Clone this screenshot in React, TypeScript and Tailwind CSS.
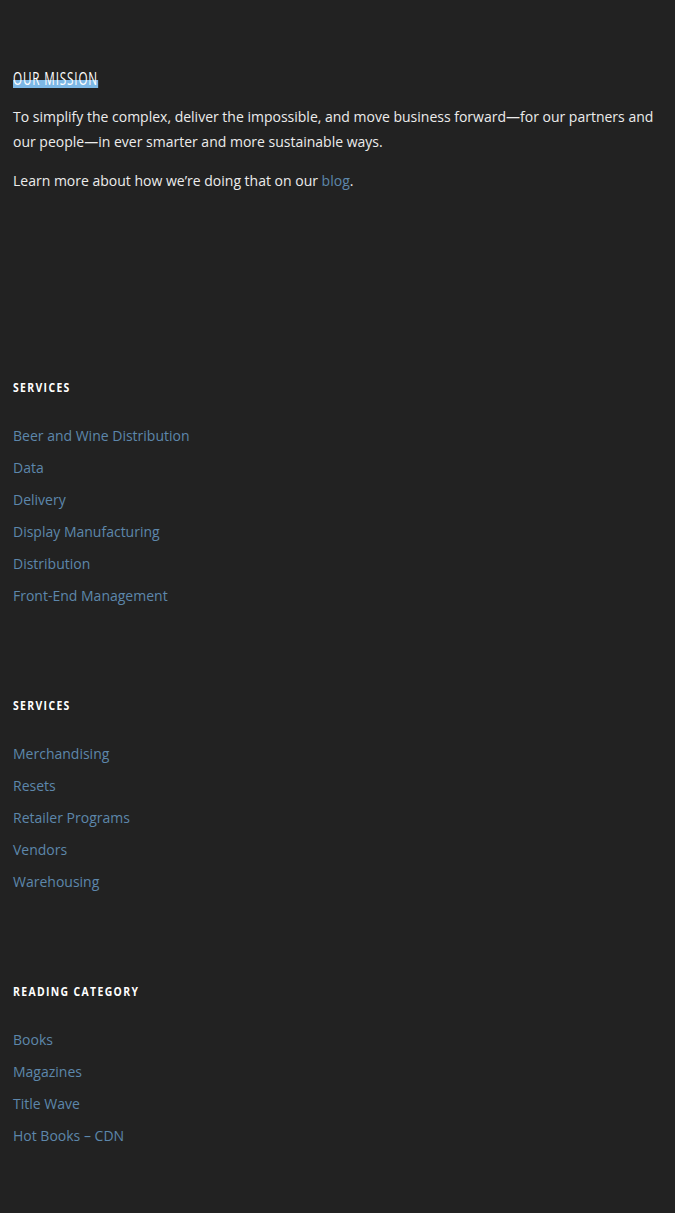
import React from "react";

const body = { fontFamily: '"Open Sans", "Noto Sans", sans-serif' };
const head = { fontFamily: '"Open Sans", "Noto Sans", sans-serif' };

function Heading({ children }: { children: React.ReactNode }) {
  return (
    <h3
      style={head}
      className="block w-fit origin-left scale-x-[0.8] text-[13px] leading-4 font-bold uppercase tracking-[1.7px] text-white"
    >
      {children}
    </h3>
  );
}

function LinkList({ items }: { items: string[] }) {
  return (
    <ul style={body} className="mt-6 flex flex-col">
      {items.map((t) => (
        <li key={t} className="h-8 flex items-center text-[14px] text-[#5d87ab]">
          {t}
        </li>
      ))}
    </ul>
  );
}

export default function App() {
  return (
    <div className="min-h-[1213px] bg-[#222222] pl-[13px] pr-4 pt-[68px] pb-20">
      <h2
        style={head}
        className="block w-fit origin-left scale-x-[0.65] text-[18px] leading-5 uppercase tracking-[1.3px] text-white bg-[linear-gradient(transparent_62%,#7db8e6_62%)]"
      >
        Our Mission
      </h2>
      <div style={body} className="mt-4 text-[14px] leading-[25px] text-[#ececec]">
        <p>
          To simplify the complex, deliver the impossible, and move business forward—for our partners and our
          people—in ever smarter and more sustainable ways.
        </p>
        <p className="mt-[14px]">
          Learn more about how we’re doing that on our <span className="text-[#5d87ab]">blog</span>.
        </p>
      </div>

      <div className="mt-[186px]">
        <Heading>Services</Heading>
        <LinkList
          items={[
            "Beer and Wine Distribution",
            "Data",
            "Delivery",
            "Display Manufacturing",
            "Distribution",
            "Front-End Management",
          ]}
        />
      </div>

      <div className="mt-[86px]">
        <Heading>Services</Heading>
        <LinkList items={["Merchandising", "Resets", "Retailer Programs", "Vendors", "Warehousing"]} />
      </div>

      <div className="mt-[86px]">
        <Heading>Reading Category</Heading>
        <LinkList items={["Books", "Magazines", "Title Wave", "Hot Books – CDN"]} />
      </div>
    </div>
  );
}
